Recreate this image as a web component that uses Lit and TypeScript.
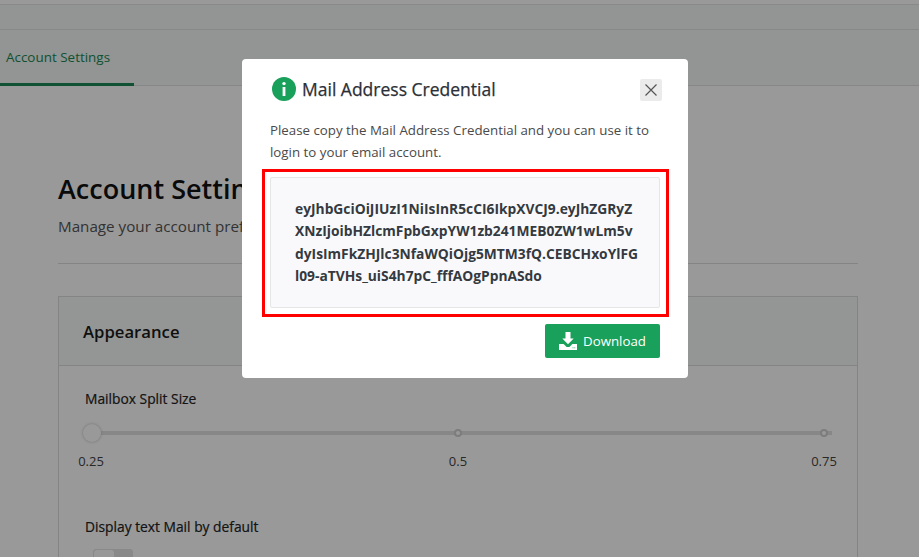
import { LitElement, html, css } from "lit";
import { customElement } from "lit/decorators.js";

@customElement("app-root")
export class AppRoot extends LitElement {
  static styles = css`
    :host { display: block; width: 919px; height: 557px; overflow: hidden; position: relative; font-family: "Open Sans", "Noto Sans", sans-serif; color: #212529; background: #fff; }
    .page { height: 557px; overflow: hidden; display: flex; flex-direction: column; }
    .top { height: 30px; flex: none; box-sizing: border-box; background: #f3f8f5; border-top: 4px solid #fff; border-bottom: 1px solid #dfe2e0; box-shadow: inset 0 1px 0 #e4e4e4; }
    .tabs { height: 56px; flex: none; box-sizing: border-box; background: #f3f8f5; border-bottom: 1px solid #dfe2e0; display: flex; }
    .tab { width: 134px; box-sizing: border-box; height: 56px; padding: 17px 0 0 6px; font-size: 13.45px; line-height: 20px; color: #198754; border-bottom: 3px solid #198754; }
    .content { padding: 85px 61px 0 58px; }
    h1 { margin: 0; font-size: 27px; line-height: 36px; font-weight: 600; color: #111; white-space: nowrap; }
    .sub { margin-top: 8px; font-size: 15.2px; line-height: 22px; color: #555; white-space: nowrap; }
    hr { margin: 26px 0 32px; border: 0; border-top: 1px solid #dcdcdc; }
    .card { border: 1px solid #dcdcdc; }
    .card-head { height: 69px; box-sizing: border-box; border-bottom: 1px solid #dcdcdc; background: #f7fbf9; padding: 0 24px; display: flex; align-items: center; font-size: 16.7px; font-weight: 600; color: #1a1a1a; }
    .card-body { padding: 23px 26px; }
    .label { font-size: 13.8px; line-height: 20px; font-weight: 500; color: #222; -webkit-text-stroke: 0.2px #222; }
    .slider { position: relative; height: 20px; margin-top: 14px; }
    .track { height: 4px; margin: 0 0 0 7px; width: 740px; background: #e1e1e1; transform: translateY(8px); }
    .thumb { position: absolute; left: -2px; top: 1px; width: 18px; height: 18px; border-radius: 50%; background: #fff; box-shadow: 0 0 3px #bbb; }
    .dot { position: absolute; top: 6px; width: 8px; height: 8px; box-sizing: border-box; border-radius: 50%; background: #fff; border: 2px solid #d0d0d0; }
    .ticks { position: relative; height: 20px; margin-top: 8px; font-size: 13px; line-height: 20px; color: #444; }
    .ticks span { position: absolute; top: 0; transform: translateX(-50%); }
    .label.second { margin-top: 46px; }
    .toggle { width: 40px; height: 20px; margin: 12px 0 0 8px; background: #e5e5e5; border-radius: 3px; position: relative; }
    .toggle::before { content: ""; position: absolute; left: 1px; top: 1px; width: 20px; height: 18px; background: #fff; border-radius: 3px; }

    .overlay { position: absolute; inset: 0; background: rgba(0, 0, 0, 0.4); }
    .modal { position: absolute; left: 242px; top: 59px; width: 446px; height: 319px; box-sizing: border-box; padding: 18px 28px 0; background: #fff; border-radius: 4px; display: flex; flex-direction: column; }
    .modal-head { display: flex; align-items: center; height: 24px; padding-left: 2px; margin-right: -2px; }
    .modal-head svg { flex: none; }
    .title { margin: 0 0 0 6px; font-size: 17.5px; line-height: 24px; font-weight: 500; color: #2b2f36; -webkit-text-stroke: 0.25px #2b2f36; flex: 1; }
    .close { width: 22px; height: 22px; background: #ebebeb; border-radius: 2px; display: flex; align-items: center; justify-content: center; margin-top: 2px; }
    .desc { margin-top: 18px; font-size: 13.3px; line-height: 22px; color: #4a4a4a; }
    .mark { margin: 6px -9px 0 -8px; border: 3px solid #f00; padding: 5px 6px 6px 5px; }
    .cred { box-sizing: border-box; height: 131px; background: #f9f9fc; border: 1px solid #e6e6e6; border-radius: 2px; padding: 20px 24px; font-size: 13.8px; line-height: 22.3px; font-weight: 700; color: #343a40; white-space: nowrap; }
    .actions { display: flex; justify-content: flex-end; margin-top: 7px; }
    .btn { width: 115px; height: 34px; background: #19a05a; border-radius: 2px; color: #fff; display: flex; align-items: center; justify-content: center; gap: 6px; font-size: 13.3px; }
  `;

  render() {
    return html`
      <div class="page">
        <div class="top"></div>
        <div class="tabs"><div class="tab">Account Settings</div></div>
        <div class="content">
          <h1>Account Settings</h1>
          <div class="sub">Manage your account preferences</div>
          <hr />
          <div class="card">
            <div class="card-head">Appearance</div>
            <div class="card-body">
              <div class="label">Mailbox Split Size</div>
              <div class="slider">
                <div class="track"></div>
                <div class="thumb"></div>
                <div class="dot" style="left:369px"></div>
                <div class="dot" style="left:735px"></div>
              </div>
              <div class="ticks">
                <span style="left:6px">0.25</span>
                <span style="left:373px">0.5</span>
                <span style="left:739px">0.75</span>
              </div>
              <div class="label second">Display text Mail by default</div>
              <div class="toggle"></div>
            </div>
          </div>
        </div>
      </div>
      <div class="overlay">
        <div class="modal">
          <div class="modal-head">
            <svg width="24" height="24" viewBox="0 0 24 24">
              <circle cx="12" cy="12" r="12" fill="#19a05a" />
              <circle cx="12" cy="6.6" r="1.7" fill="#fff" />
              <rect x="10.6" y="10" width="2.8" height="9" fill="#fff" />
            </svg>
            <div class="title">Mail Address Credential</div>
            <div class="close">
              <svg width="14" height="14" viewBox="0 0 14 14"><path d="M1.5 1.5 12.5 12.5M12.5 1.5 1.5 12.5" stroke="#555" stroke-width="1.2" fill="none" /></svg>
            </div>
          </div>
          <div class="desc">Please copy the Mail Address Credential and you can use it to login to your email account.</div>
          <div class="mark">
            <div class="cred">eyJhbGciOiJIUzI1NiIsInR5cCI6IkpXVCJ9.eyJhZGRyZ<br />XNzIjoibHZlcmFpbGxpYW1zb241MEB0ZW1wLm5v<br />dyIsImFkZHJlc3NfaWQiOjg5MTM3fQ.CEBCHxoYlFG<br />l09-aTVHs_uiS4h7pC_fffAOgPpnASdo</div>
          </div>
          <div class="actions">
            <div class="btn">
              <svg width="18" height="18" viewBox="0 0 18 18"><path fill="#fff" d="M6.5 0h5v6.5h3.2L9 12.2 3.3 6.5h3.2zM0 12h4.6L7.6 15h2.8l3-3H18V18H0z" /><circle cx="14" cy="15.7" r=".5" fill="#19a05a"/><circle cx="15.8" cy="15.7" r=".5" fill="#19a05a"/></svg>
              Download
            </div>
          </div>
        </div>
      </div>
    `;
  }
}
